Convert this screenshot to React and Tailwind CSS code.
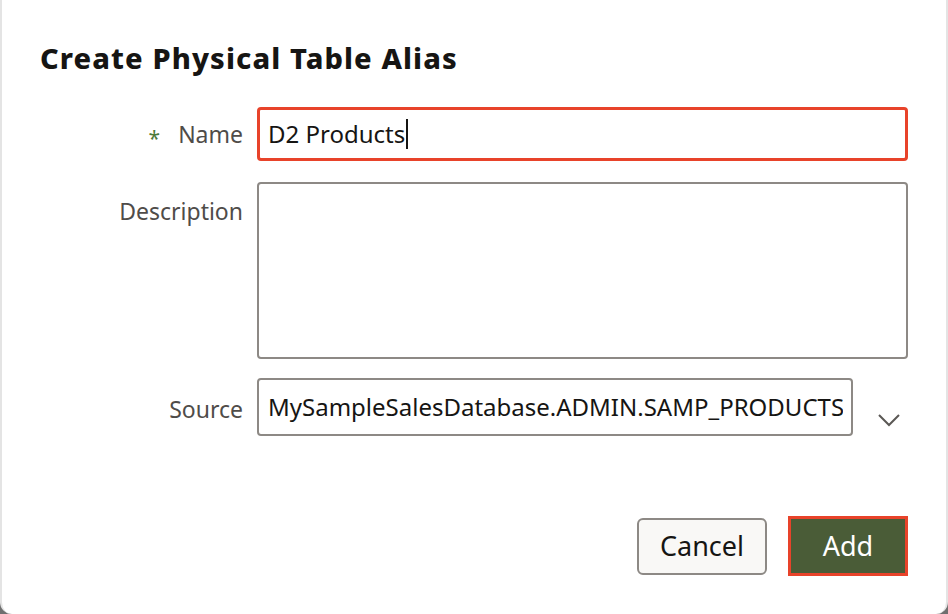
import React from "react";

export default function App() {
  return (
    <div className="w-[948px] h-[614px] bg-[#6f6f6f] overflow-hidden" style={{ fontFamily: '"Noto Sans", "Open Sans", sans-serif' }}>
      <div className="w-full h-full bg-white rounded-b-[12px] border-l-2 border-r-2 border-[#e4e4e4] flex flex-col">
        <h1 className="pl-[38px] pt-[40px] text-[29px] leading-[36px] font-extrabold text-[#161513] tracking-[1.1px]">
          Create Physical Table Alias
        </h1>
        <div className="mt-[31px] grid grid-cols-[241px_1fr] gap-x-[14px] pr-[38px]">
          {/* Name */}
          <div className="flex items-center justify-end h-[54px] text-[23px] text-[#4f4c49]">
            <span className="text-[#4c7a3a] text-[21px] mr-[18px] mt-[10px]">*</span>
            <span>Name</span>
          </div>
          <div className="h-[54px] rounded-[4px] border-[3px] border-[#e8432a] flex items-center pl-[8px]">
            <span className="text-[24px] text-[#161513]">D2 Products</span>
            <span className="w-[1.5px] h-[30px] bg-[#161513] ml-[1px]" />
          </div>

          {/* Description */}
          <div className="mt-[21px] flex justify-end pt-[14px] text-[23px] text-[#4f4c49] leading-[30px]">
            Description
          </div>
          <div className="mt-[21px] h-[177px] rounded-[4px] border-2 border-[#8d8985]" />

          {/* Source */}
          <div className="mt-[19px] flex items-center justify-end h-[58px] text-[23px] text-[#4f4c49] pt-[4px]">
            Source
          </div>
          <div className="mt-[19px] flex items-center">
            <div className="w-[596px] h-[58px] rounded-[4px] border-2 border-[#8d8985] flex items-center pl-[9px] pr-[8px] overflow-hidden">
              <span className="text-[24px] text-[#161513] whitespace-nowrap overflow-hidden">
                MySampleSalesDatabase.ADMIN.SAMP_PRODUCTS
              </span>
            </div>
            <svg className="ml-[24px] mt-[26px]" width="24" height="14" viewBox="0 0 24 14" fill="none">
              <path d="M2 2 L12 12 L22 2" stroke="#5b5855" strokeWidth="2" />
            </svg>
          </div>
        </div>
        <div className="mt-auto mb-[38px] mr-[38px] flex justify-end items-center gap-[21px]">
          <button className="w-[130px] h-[57px] rounded-[6px] border-2 border-[#8d8985] bg-[#f9f8f6] text-[27px] text-[#161513]">
            Cancel
          </button>
          <button className="w-[120px] h-[60px] border-[3px] border-[#e8432a] bg-[#4a5c37] text-[27px] text-white">
            Add
          </button>
        </div>
      </div>
    </div>
  );
}
